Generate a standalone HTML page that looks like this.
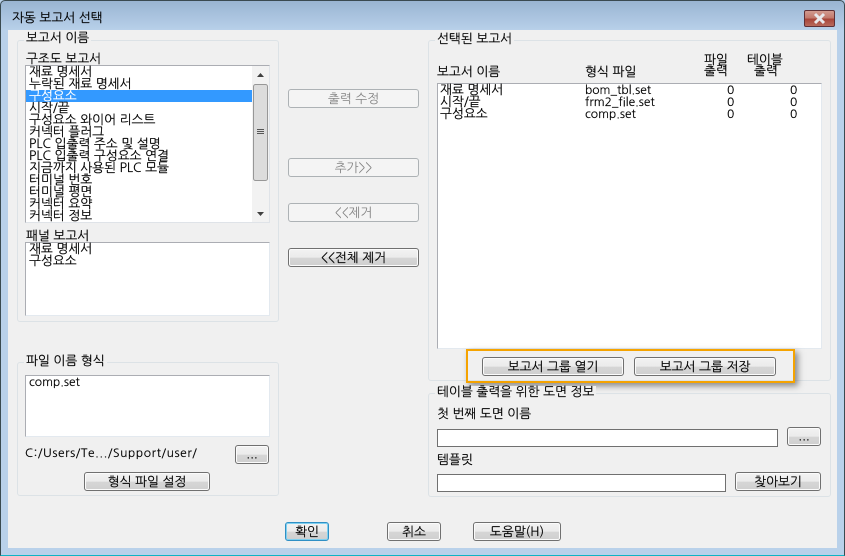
<!DOCTYPE html>
<html lang="ko"><head><meta charset="utf-8">
<style>
html,body{margin:0;padding:0;width:845px;height:556px;overflow:hidden;background:#b9d1ea}
*{box-sizing:border-box}
#w{position:absolute;left:0;top:0;width:845px;height:556px;overflow:hidden;background:linear-gradient(#99b4d1 0,#a6c0dc 12px,#b9d1ea 30px,#b9d1ea 100%);border:1px solid #3a4a50;border-bottom-color:#0fb4c4;border-radius:5px 5px 0 0}
.t{position:absolute;font:12.7px/12px "NanumGothic","Liberation Sans",sans-serif;color:#000;white-space:pre;-webkit-text-stroke:.15px #000}
.s{font-size:12px}
.g{position:absolute;border:1px solid #dce2e6;border-radius:3px}
.l{background:#f0f0f0;padding:0 2px}
.b{position:absolute;background:#fff;border:1px solid #abadb3;border-bottom-color:#e3e9ef;border-right-color:#e3e9ef}
.i{position:absolute;background:#fff;border:1px solid #707070}
.bt{position:absolute;height:19px;border:1px solid #707070;border-radius:3px;background:linear-gradient(#f2f2f2 0,#ebebeb 50%,#d6d6d6 52%,#cfcfcf 100%);box-shadow:inset 0 0 0 1px #fbfbfb;text-align:center;font:12.7px/18px "NanumGothic","Liberation Sans",sans-serif;color:#000;white-space:pre;-webkit-text-stroke:.15px #000}
.d{background:#f4f4f4;border-color:#adb2b5;color:#838383;box-shadow:none;-webkit-text-stroke:0}
.dots{line-height:16px}
</style></head><body>
<div id="w"></div>
<div style="position:absolute;left:8px;top:30px;width:829px;height:518px;background:#f0f0f0"></div>

<div class="t" style="left:12px;top:12px">자동 보고서 선택</div>
<div style="position:absolute;left:804px;top:10px;width:31px;height:17px;border:1px solid #5f3036;border-radius:2px;background:linear-gradient(#d29a90 0,#c27a6e 45%,#a8453a 55%,#b86a5c 100%)">
<svg width="29" height="15" style="display:block"><path d="M10 3 L19 12 M19 3 L10 12" stroke="#e8e8ec" stroke-width="3" fill="none"/></svg></div>

<div class="g" style="left:17px;top:40px;width:262px;height:282px"></div>
<div class="t l" style="left:24px;top:32px">보고서 이름</div>
<div class="t" style="left:26px;top:53px">구조도 보고서</div>
<div class="b" style="left:25px;top:65px;width:245px;height:158px;border-color:#abadb3 #dfe3e8 #dfe3e8 #abadb3"></div>
<div style="position:absolute;left:26px;top:90px;width:226px;height:12px;background:#3399ff"></div>
<div class="t" style="left:29px;top:66px">재료 명세서</div>
<div class="t" style="left:29px;top:78px">누락된 재료 명세서</div>
<div class="t" style="left:29px;top:90px;color:#fff;-webkit-text-stroke:.15px #fff">구성요소</div>
<div class="t" style="left:29px;top:102px">시작/끝</div>
<div class="t" style="left:29px;top:114px">구성요소 와이어 리스트</div>
<div class="t" style="left:29px;top:126px">커넥터 플러그</div>
<div class="t" style="left:29px;top:138px">PLC 입출력 주소 및 설명</div>
<div class="t" style="left:29px;top:150px">PLC 입출력 구성요소 연결</div>
<div class="t" style="left:29px;top:162px">지금까지 사용된 PLC 모듈</div>
<div class="t" style="left:29px;top:174px">터미널 번호</div>
<div class="t" style="left:29px;top:186px">터미널 평면</div>
<div class="t" style="left:29px;top:198px">커넥터 요약</div>
<div class="t" style="left:29px;top:210px">커넥터 정보</div>
<svg style="position:absolute;left:252px;top:66px" width="17" height="156">
  <rect width="17" height="156" fill="#f2f2f2"/>
  <path d="M5 11 L12 11 L8.500 7 Z" fill="#404040"/>
  <path d="M5 146 L12 146 L8.500 150 Z" fill="#404040"/>
  <rect x="1.500" y="18.500" width="14" height="96" rx="2" fill="#dcdcdc" stroke="#979797"/>
  <path d="M5 63.500 H12 M5 65.500 H12 M5 67.500 H12" stroke="#555" stroke-width="1"/>
</svg>

<div class="t" style="left:26px;top:230px">패널 보고서</div>
<div class="b" style="left:25px;top:242px;width:245px;height:74px"></div>
<div class="t" style="left:29px;top:243px">재료 명세서</div>
<div class="t" style="left:29px;top:255px">구성요소</div>

<div class="g" style="left:17px;top:362px;width:262px;height:134px"></div>
<div class="t l" style="left:24px;top:355px">파일 이름 형식</div>
<div class="b" style="left:25px;top:375px;width:245px;height:62px"></div>
<div class="t s" style="left:29px;top:376px">comp.set</div>
<div class="t s" style="left:25px;top:447px;letter-spacing:.6px">C:/Users/Te.../Support/user/</div>
<div class="bt dots" style="left:235px;top:445px;width:34px">...</div>
<div class="bt" style="left:84px;top:472px;width:126px">형식 파일 설정</div>

<div class="bt d" style="left:288px;top:89px;width:131px">출력 수정</div>
<div class="bt d" style="left:288px;top:158px;width:131px">추가&gt;&gt;</div>
<div class="bt d" style="left:288px;top:203px;width:131px">&lt;&lt;제거</div>
<div class="bt" style="left:288px;top:248px;width:131px">&lt;&lt;전체 제거</div>

<div class="g" style="left:428px;top:40px;width:403px;height:341px"></div>
<div class="t l" style="left:435px;top:33px">선택된 보고서</div>
<div class="t" style="left:437px;top:66px">보고서 이름</div>
<div class="t" style="left:585px;top:66px">형식 파일</div>
<div class="t" style="left:704px;top:54px">파일</div>
<div class="t" style="left:704px;top:65px">출력</div>
<div class="t" style="left:747px;top:54px">테이블</div>
<div class="t" style="left:754px;top:65px">출력</div>
<div class="b" style="left:437px;top:83px;width:385px;height:266px"></div>
<div class="t" style="left:440px;top:84px">재료 명세서</div>
<div class="t" style="left:440px;top:96px">시작/끝</div>
<div class="t" style="left:440px;top:108px">구성요소</div>
<div class="t s" style="left:585px;top:84px">bom_tbl.set</div>
<div class="t s" style="left:585px;top:96px">frm2_file.set</div>
<div class="t s" style="left:585px;top:108px">comp.set</div>
<div class="t s" style="left:727px;top:84px">0</div>
<div class="t s" style="left:727px;top:96px">0</div>
<div class="t s" style="left:727px;top:108px">0</div>
<div class="t s" style="left:790px;top:84px">0</div>
<div class="t s" style="left:790px;top:96px">0</div>
<div class="t s" style="left:790px;top:108px">0</div>

<div style="position:absolute;left:466px;top:349px;width:329px;height:34px;border:2px solid #f5a300;box-shadow:3px 3px 6px rgba(70,70,70,.6)"></div>
<div class="bt" style="left:482px;top:357px;width:142px">보고서 그룹 열기</div>
<div class="bt" style="left:634px;top:357px;width:142px">보고서 그룹 저장</div>

<div class="g" style="left:428px;top:393px;width:403px;height:104px"></div>
<div class="t l" style="left:435px;top:386px">테이블 출력을 위한 도면 정보</div>
<div class="t" style="left:437px;top:408px">첫 번째 도면 이름</div>
<div class="i" style="left:437px;top:429px;width:341px;height:18px"></div>
<div class="bt dots" style="left:787px;top:427px;width:34px">...</div>
<div class="t" style="left:437px;top:454px">템플릿</div>
<div class="i" style="left:437px;top:474px;width:289px;height:18px"></div>
<div class="bt" style="left:735px;top:472px;width:86px">찾아보기</div>

<div class="bt" style="left:285px;top:522px;width:44px;border-color:#2f8fc4;box-shadow:inset 0 0 0 1px #7fd0f0">확인</div>
<div class="bt" style="left:387px;top:522px;width:54px">취소</div>
<div class="bt" style="left:473px;top:522px;width:88px">도움말(H)</div>
</body></html>
